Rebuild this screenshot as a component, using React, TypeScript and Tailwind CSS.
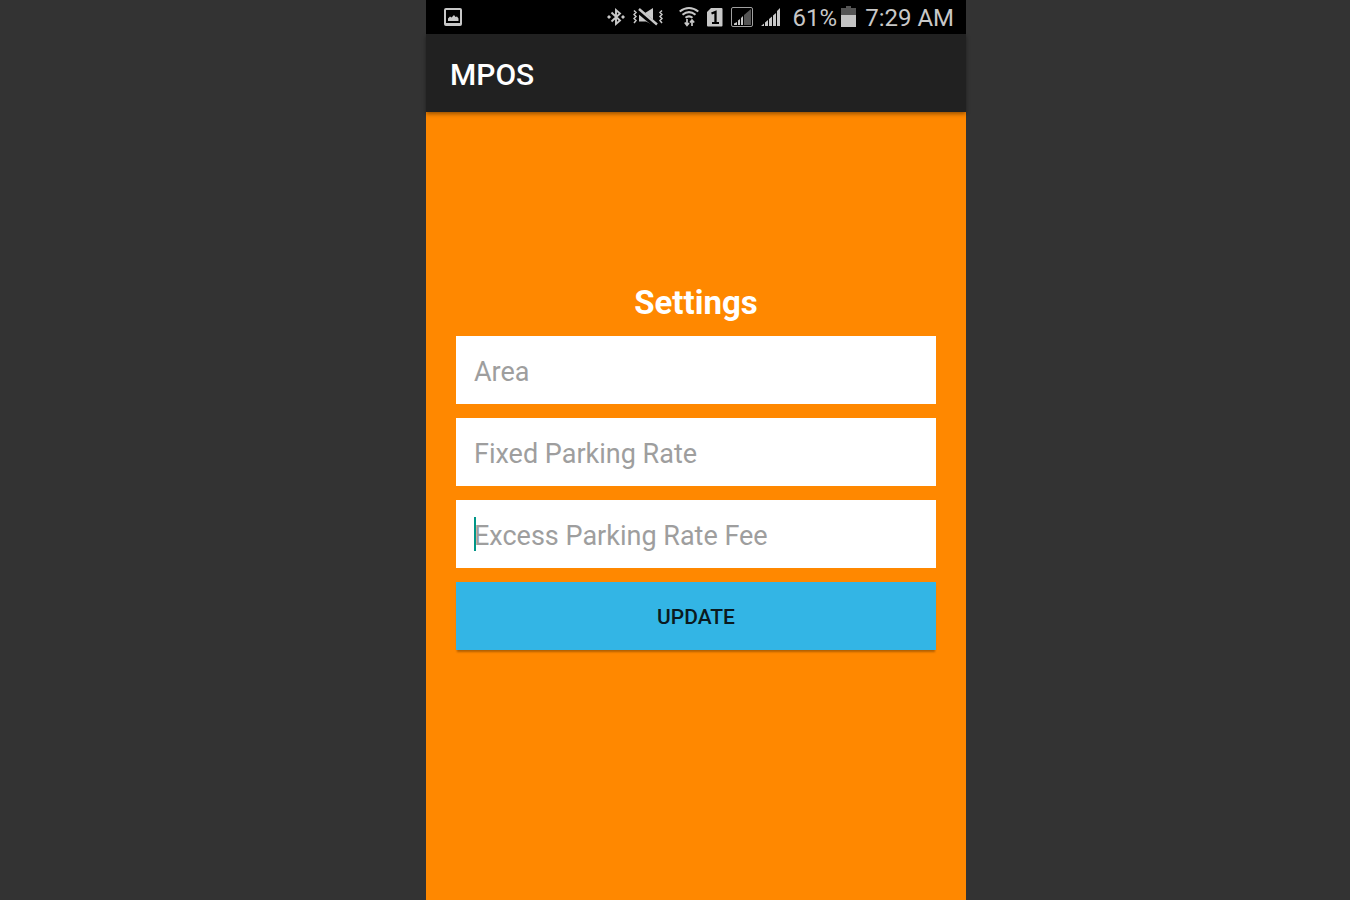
import type { ReactNode } from 'react';

function Glyph({ width, children }: { width: string; children: ReactNode }) {
  return (
    <span aria-hidden="true" className={`block h-6 shrink-0 ${width}`}>
      {children}
    </span>
  );
}

function PictureIcon() {
  return (
    <svg viewBox="0 0 18 24" className="h-full w-full" fill="none">
      <rect x="1" y="4" width="16" height="16" rx="1" stroke="#c8c8c8" strokeWidth="2" />
      <path d="M4 16v-2.500l2-2 1.500 1 2.500-2.500 1.500 2 1.500-.500 1.500 2V16z" fill="#c8c8c8" />
      <path d="M1 18.500h16" stroke="#c8c8c8" />
    </svg>
  );
}

function BluetoothIcon() {
  return (
    <svg viewBox="0 0 18 24" className="h-full w-full" fill="none" stroke="#c8c8c8" strokeWidth="1.900">
      <path d="M4.500 7.500l8.500 8L9 19V5l4 3.500-8.500 8" />
      <path d="M0 12l2-2 2 2-2 2zM14 12l2-2 2 2-2 2z" fill="#c8c8c8" stroke="none" />
    </svg>
  );
}

function VibrateMuteIcon() {
  return (
    <svg viewBox="0 0 30 24" className="h-full w-full" fill="none">
      <path d="M6 8h6l8-5v17l-7-3.500H6z" fill="#c8c8c8" />
      <path d="M5 5.500l18 15" stroke="#000" strokeWidth="5" />
      <path d="M6 4l18 15.500" stroke="#c8c8c8" strokeWidth="2.400" />
      <path d="M1 5.500L3 7.500 1 9.500l2 2-2 2 2 2-2 2.500M29 5.500l-2 2 2 2-2 2 2 2-2 2 2 2.500" stroke="#c8c8c8" strokeWidth="1.500" />
    </svg>
  );
}

function WifiIcon() {
  return (
    <svg viewBox="0 0 20 24" className="h-full w-full" fill="none" stroke="#c8c8c8">
      <path d="M.7 6.500Q10-.5 19.300 6.500M3.500 9.800Q10 4.500 16.500 9.800M6.500 12.800Q10 9.800 13.500 12.800" strokeWidth="2.100" />
      <path d="M8 14v6M5.800 17.500L8 20.300l2-2.300M13 21v-6M11 17.500l2-2.500 2.200 2.500" strokeWidth="1.700" />
    </svg>
  );
}

function SimIcon() {
  return (
    <svg viewBox="0 0 16 24" className="h-full w-full" fill="none">
      <path d="M4 3h10.500q1 0 1 1v16.500q0 1-1 1H1q-1 0-1-1V7z" fill="#c8c8c8" />
      <path d="M4.500 8.500L8.500 7V19" stroke="#000" strokeWidth="2.300" />
      <path d="M5 18h7" stroke="#000" strokeWidth="2" />
    </svg>
  );
}

function BoxedSignalIcon() {
  return (
    <svg viewBox="0 0 22 24" className="h-full w-full" fill="none">
      <rect x=".5" y="2.500" width="21" height="19" rx="1.500" stroke="#a0a0a0" />
      <path d="M13 10l7-6v16h-7z" fill="#555" />
      <path d="M3 18.500l3-1.500v3H3zM7 15.500l2-1.500v6H7zM10 13l2-2v9h-2z" fill="#c8c8c8" />
    </svg>
  );
}

function SignalIcon() {
  return (
    <svg viewBox="0 0 20 24" className="h-full w-full" fill="#c8c8c8">
      <path d="M0 21l3-2.500V21zM4 17.500l3-2.500v6H4zM8 14l3-2.500V21H8zM12 10.500L15 8v13h-3zM16 6l3-3v18h-3z" />
    </svg>
  );
}

function BatteryIcon() {
  return (
    <svg viewBox="0 0 16 24" className="h-full w-full">
      <path d="M0 3h5V1h5v2h5v7H0z" fill="#555" />
      <path d="M0 10h15v12H0z" fill="#c4c4c4" />
    </svg>
  );
}

function StatusBar() {
  return (
    <div className="flex h-[34px] items-center bg-black pr-3 pl-[18px] text-[24px] leading-6 text-[#c8c8c8]">
      <Glyph width="w-[18px]"><PictureIcon /></Glyph>
      <div className="ml-auto flex items-center gap-2">
        <div className="flex items-center gap-4">
          <div className="flex items-center gap-2">
            <Glyph width="w-[18px]"><BluetoothIcon /></Glyph>
            <Glyph width="w-[30px]"><VibrateMuteIcon /></Glyph>
          </div>
          <div className="flex items-center gap-2">
            <Glyph width="w-5"><WifiIcon /></Glyph>
            <Glyph width="w-4"><SimIcon /></Glyph>
            <Glyph width="w-[22px]"><BoxedSignalIcon /></Glyph>
            <Glyph width="w-5"><SignalIcon /></Glyph>
          </div>
        </div>
        <div className="flex items-center gap-1 pl-1">
          <span className="pt-0.5">61%</span>
          <Glyph width="w-4"><BatteryIcon /></Glyph>
        </div>
        <span className="pt-0.5">7:29 AM</span>
      </div>
    </div>
  );
}

function Field({ id, label, active = false }: { id: string; label: string; active?: boolean }) {
  return (
    <div className="relative">
      <input
        id={id}
        type="text"
        aria-label={label}
        placeholder={label}
        className="block h-[68px] w-full bg-white px-[18px] pt-1 text-[27px] text-black outline-none placeholder:text-[#9e9e9e]"
      />
      {active && <span aria-hidden="true" className="absolute top-[17px] left-[18px] h-[34px] w-0.5 bg-[#009688]" />}
    </div>
  );
}

export default function App() {
  return (
    <div className="flex min-h-screen justify-center bg-[#333333] pl-[42px] font-[Roboto,sans-serif]">
      <div className="flex w-full max-w-[540px] flex-col bg-[#ff8800]">
        <StatusBar />
        <header className="flex h-[78px] items-center bg-[#212121] px-6 pt-1 shadow-[0_2px_4px_rgba(0,0,0,0.4)]">
          <h1 className="text-[30px] leading-9 font-medium text-white">MPOS</h1>
        </header>
        <main className="flex-1 px-[30px] pt-[172px] pb-8">
          <form className="flex flex-col gap-3.5" onSubmit={(e) => e.preventDefault()}>
            <h2 className="text-center text-[33px] leading-[38px] font-bold text-white">Settings</h2>
            <Field id="area" label="Area" />
            <Field id="fixed-rate" label="Fixed Parking Rate" />
            <Field id="excess-rate" label="Excess Parking Rate Fee" active />
            <button
              type="submit"
              className="h-[68px] w-full bg-[#33b5e5] pt-1 text-[21px] font-medium text-[#0b1a20] shadow-[0_3px_2px_-1px_rgba(0,0,0,0.3)]"
            >
              UPDATE
            </button>
          </form>
        </main>
      </div>
    </div>
  );
}
